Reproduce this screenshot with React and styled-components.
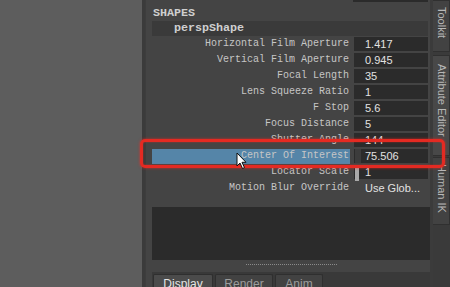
import React from "react"
import styled, { createGlobalStyle } from "styled-components"

const Global = createGlobalStyle`
  html, body { margin: 0; padding: 0; background: #5d5d5d; overflow: hidden; }
  * { box-sizing: border-box; }
`

const Screen = styled.div`
  position: relative;
  display: flex;
  width: 450px;
  height: 287px;
  overflow: hidden;
  background: #5d5d5d;
`

const Viewport = styled.div`
  width: 142px;
  background: #5d5d5d;
`

const Divider = styled.div`
  width: ${p => p.w || 3}px;
  background: #3b3b3b;
`

const Panel = styled.div`
  width: 285px;
  height: 287px;
  overflow: hidden;
  background: #444444;
  display: flex;
  flex-direction: column;
  padding-left: 6px;
  border-left: 1px solid #3d3d3d;
  & > * { flex-shrink: 0; }
`

const TopStub = styled.div`
  height: 2px;
  width: 75px;
  margin-left: 201px;
  background: #2b2b2b;
`

const SectionHeader = styled.div`
  height: 16px;
  margin-top: 3px;
  line-height: 16px;
  padding-left: 1px;
  font-family: "Liberation Mono", monospace;
  font-weight: bold;
  font-size: 11.7px;
  color: #cfcfcf;
`

const NodeRow = styled.div`
  width: 276px;
  height: 15px;
  line-height: 15px;
  padding-left: 22px;
  background: #3a3a3a;
  font-family: "Liberation Mono", monospace;
  font-weight: bold;
  font-size: 11.7px;
  color: #cfcfcf;
`

const AttrRow = styled.div`
  display: grid;
  grid-template-columns: 198px 74px;
  column-gap: 4px;
  width: 276px;
  height: 16px;
`

const Label = styled.div`
  height: 15px;
  margin-top: 1px;
  line-height: 14px;
  text-align: right;
  padding-right: 1px;
  font-family: "Liberation Mono", monospace;
  font-size: 10px;
  color: #c6c6c6;
  white-space: nowrap;
  background: ${p => (p.selected ? "#5585a8" : "transparent")};
`

const Field = styled.div`
  position: relative;
  height: 14px;
  margin-top: 1px;
  line-height: 14px;
  padding-left: 11px;
  font-family: "Liberation Sans", Arial, sans-serif;
  font-size: 11px;
  color: #e2e2e2;
  background: ${p => (p.plain ? "transparent" : "#2b2b2b")};
  white-space: nowrap;
`

const SliderMark = styled.span`
  position: absolute;
  left: 1px;
  top: ${p => (p.light ? 2 : 0)}px;
  width: ${p => (p.light ? 4 : 6)}px;
  height: 14px;
  background: ${p => (p.light ? "#a9a9a9" : "#3c3c3c")};
`

const DarkArea = styled.div`
  width: 278px;
  height: 53px;
  margin-top: 11px;
  background: #2b2b2b;
`

const Splitter = styled.div`
  width: 278px;
  height: 12px;
  display: flex;
  justify-content: center;
  padding-top: 4px;
  &::before {
    content: "";
    width: 91px;
    height: 0;
    border-top: 1px dotted #8a8a8a;
  }
`

const TabBar = styled.div`
  width: 278px;
  height: 20px;
  display: flex;
  gap: 2px;
  padding: 2px 0 0 1px;
  background: #393939;
`

const Tab = styled.div`
  width: ${p => p.w}px;
  height: 20px;
  padding-top: 2px;
  text-align: center;
  font-family: "Liberation Sans", Arial, sans-serif;
  font-size: 12px;
  color: ${p => (p.active ? "#e4e4e4" : "#9c9c9c")};
  background: ${p => (p.active ? "#4b4b4b" : "#424242")};
  border: 1px solid #2f2f2f;
  border-bottom: none;
  border-radius: 2px 2px 0 0;
`

const SideStrip = styled.div`
  width: 17px;
  display: flex;
  flex-direction: column;
  gap: 3px;
  background: #3a3a3a;
`

const SideTab = styled.div`
  height: ${p => p.h}px;
  margin-top: ${p => p.mt || 0}px;
  display: flex;
  justify-content: ${p => (p.end ? "flex-end" : "flex-start")};
  padding: ${p => p.pad || "0"};
  writing-mode: vertical-rl;
  overflow: hidden;
  white-space: nowrap;
  font-family: "Liberation Sans", Arial, sans-serif;
  font-size: 11px;
  line-height: 15px;
  color: #b8b8b8;
  background: ${p => (p.active ? "#484848" : "#424242")};
  border: 1px solid #303030;
  border-left: none;
`

const Highlight = styled.div`
  position: absolute;
  left: 140px;
  top: 139px;
  width: 305px;
  height: 29px;
  border: 3px solid #e42a22;
  border-radius: 5px;
  box-shadow: 0 0 3px rgba(255, 40, 30, 0.7), inset 0 0 2px rgba(255, 40, 30, 0.6);
  pointer-events: none;
`

const Cursor = styled.svg`
  position: absolute;
  left: 236px;
  top: 152px;
`

const attrs = [
  { label: "Horizontal Film Aperture", value: "1.417" },
  { label: "Vertical Film Aperture", value: "0.945" },
  { label: "Focal Length", value: "35" },
  { label: "Lens Squeeze Ratio", value: "1" },
  { label: "F Stop", value: "5.6" },
  { label: "Focus Distance", value: "5" },
  { label: "Shutter Angle", value: "144" },
  { label: "Center Of Interest", value: "75.506", selected: true, mark: "dark" },
  { label: "Locator Scale", value: "1", mark: "light" },
  { label: "Motion Blur Override", value: "Use Glob...", plain: true },
]

export default function App() {
  return (
    <Screen>
      <Global />
      <Viewport />
      <Divider />
      <Panel>
        <TopStub />
        <SectionHeader>SHAPES</SectionHeader>
        <NodeRow>perspShape</NodeRow>
        {attrs.map((a, i) => (
          <AttrRow key={i}>
            <Label selected={a.selected}>{a.label}</Label>
            <Field plain={a.plain}>
              {a.mark && <SliderMark light={a.mark === "light"} />}
              {a.value}
            </Field>
          </AttrRow>
        ))}
        <DarkArea />
        <Splitter />
        <TabBar>
          <Tab w={60} active>Display</Tab>
          <Tab w={58}>Render</Tab>
          <Tab w={48}>Anim</Tab>
        </TabBar>
      </Panel>
      <Divider />
      <SideStrip>
        <SideTab h={52} end pad="0 0 13px 0">Toolkit</SideTab>
        <SideTab h={101} active pad="8px 0 0 0">Attribute Editor</SideTab>
        <SideTab h={68} mt={-2} pad="6px 0 0 0">Human IK</SideTab>
      </SideStrip>
      <Highlight />
      <Cursor width="12" height="18" viewBox="0 0 12 18">
        <path d="M1 1 L1 14 L4 11 L6.5 16.5 L8.5 15.6 L6 10.3 L10 10.3 Z" fill="#fff" stroke="#111" strokeWidth="1" strokeLinejoin="round" />
      </Cursor>
    </Screen>
  )
}
